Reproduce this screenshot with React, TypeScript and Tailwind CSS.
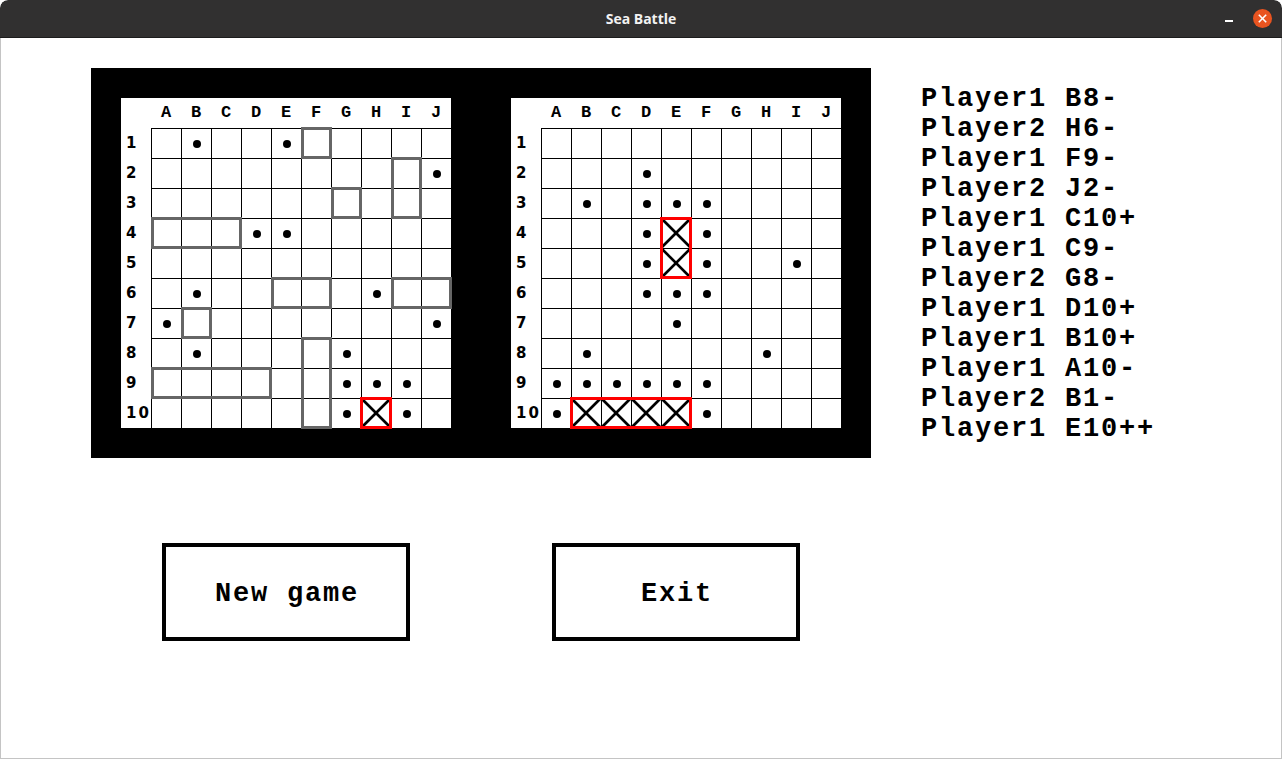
import React from "react";

const COLS = "ABCDEFGHIJ".split("");
const ROWS = Array.from({ length: 10 }, (_, i) => i + 1);

type Range = [string, string];

type BoardData = {
  dots: string[];
  ships: Range[];
  hits: Range[];
};

const pos = (code: string) => ({
  c: COLS.indexOf(code[0]),
  r: parseInt(code.slice(1), 10) - 1,
});

const span = ([from, to]: Range) => {
  const a = pos(from);
  const b = pos(to);
  return {
    c: Math.min(a.c, b.c),
    r: Math.min(a.r, b.r),
    w: Math.abs(a.c - b.c) + 1,
    h: Math.abs(a.r - b.r) + 1,
  };
};

const cellsIn = (range: Range) => {
  const s = span(range);
  const out: string[] = [];
  for (let r = s.r; r < s.r + s.h; r++) {
    for (let c = s.c; c < s.c + s.w; c++) out.push(`${COLS[c]}${r + 1}`);
  }
  return out;
};

const myBoard: BoardData = {
  dots: ["B1", "E1", "J2", "D4", "E4", "B6", "H6", "A7", "J7", "B8", "G8", "G9", "H9", "I9", "G10", "I10"],
  ships: [
    ["F1", "F1"],
    ["I2", "I3"],
    ["G3", "G3"],
    ["A4", "C4"],
    ["E6", "F6"],
    ["I6", "J6"],
    ["B7", "B7"],
    ["F8", "F10"],
    ["A9", "D9"],
  ],
  hits: [["H10", "H10"]],
};

const enemyBoard: BoardData = {
  dots: [
    "D2",
    "B3", "D3", "E3", "F3",
    "D4", "F4",
    "D5", "F5", "I5",
    "D6", "E6", "F6",
    "E7",
    "B8", "H8",
    "A9", "B9", "C9", "D9", "E9", "F9",
    "A10", "F10",
  ],
  ships: [],
  hits: [
    ["E4", "E5"],
    ["B10", "E10"],
  ],
};

const moves = [
  "Player1 B8-",
  "Player2 H6-",
  "Player1 F9-",
  "Player2 J2-",
  "Player1 C10+",
  "Player1 C9-",
  "Player2 G8-",
  "Player1 D10+",
  "Player1 B10+",
  "Player1 A10-",
  "Player2 B1-",
  "Player1 E10++",
];

const mono = "font-['Liberation_Mono','Courier_New',monospace]";

const Board = ({ data }: { data: BoardData }) => {
  const hitCells = new Set(data.hits.flatMap(cellsIn));
  const dots = new Set(data.dots);

  return (
    <div className="flex flex-col bg-white w-[330px] h-[330px]">
      <div className={`flex h-[30px] ${mono} text-[17px] font-bold text-black`}>
        <div className="w-[30px]" />
        {COLS.map((col) => (
          <div key={col} className="w-[30px] flex items-center justify-center">
            {col}
          </div>
        ))}
      </div>
      <div className="flex">
        <div className="flex flex-col w-[30px] font-['DejaVu_Sans',sans-serif] text-[15px] font-bold tracking-[2px] text-black">
          {ROWS.map((row) => (
            <div key={row} className="h-[30px] flex items-center pl-[5px]">
              {row}
            </div>
          ))}
        </div>
        <div className="relative grid grid-cols-10 w-[300px] h-[300px]">
          {ROWS.map((row) =>
            COLS.map((col) => {
              const code = `${col}${row}`;
              return (
                <div
                  key={code}
                  className="relative w-[30px] h-[30px] border-l border-t border-black flex items-center justify-center"
                >
                  {dots.has(code) && <div className="w-2 h-2 rounded-full bg-black" />}
                  {hitCells.has(code) && (
                    <svg className="absolute -left-px -top-px" width="30" height="30" viewBox="0 0 30 30">
                      <line x1="1" y1="1" x2="29" y2="29" stroke="black" strokeWidth="2.6" />
                      <line x1="29" y1="1" x2="1" y2="29" stroke="black" strokeWidth="2.6" />
                    </svg>
                  )}
                </div>
              );
            })
          )}
          {data.ships.map((range, i) => {
            const s = span(range);
            return (
              <div
                key={`s${i}`}
                className="absolute border-[3px] border-[#666666]"
                style={{ left: s.c * 30, top: s.r * 30 - 1, width: s.w * 30 + 1, height: s.h * 30 + 2 }}
              />
            );
          })}
          {data.hits.map((range, i) => {
            const s = span(range);
            return (
              <div
                key={`h${i}`}
                className="absolute border-[3px] border-[#ff0000]"
                style={{ left: s.c * 30 - 1, top: s.r * 30 - 1, width: s.w * 30 + 2, height: s.h * 30 + 2 }}
              />
            );
          })}
        </div>
      </div>
    </div>
  );
};

const BigButton = ({ label }: { label: string }) => (
  <button
    type="button"
    className={`w-[248px] h-[98px] border-4 border-black bg-white flex items-center justify-center pt-[3px] ${mono} text-[27px] leading-[30px] tracking-[1.8px] font-bold text-black`}
  >
    <span className="mr-[-2px]">{label}</span>
  </button>
);

export default function App() {
  return (
    <div className="w-[1282px] h-[759px] flex flex-col overflow-hidden bg-white rounded-t-[8px]">
      <div className="relative h-[38px] shrink-0 bg-[#313030] border-b border-[#1c1c1c] flex items-center justify-center rounded-t-[8px]">
        <span className="font-['Open_Sans','Noto_Sans',sans-serif] text-[14px] font-bold text-[#f2f2f2]">
          Sea Battle
        </span>
        <div className="absolute right-[10px] top-[9px] flex items-center gap-[20px]">
          <div className="w-[8px] h-[2px] bg-white mt-[4px]" />
          <div className="w-[19px] h-[19px] rounded-full bg-[#e95420] flex items-center justify-center">
            <svg width="9" height="9" viewBox="0 0 9 9">
              <line x1="0.8" y1="0.8" x2="8.2" y2="8.2" stroke="white" strokeWidth="1.6" />
              <line x1="8.2" y1="0.8" x2="0.8" y2="8.2" stroke="white" strokeWidth="1.6" />
            </svg>
          </div>
        </div>
      </div>

      <div className="flex-1 flex flex-col border-x border-b border-[#c4c4c4] pl-[90px] pt-[30px]">
        <div className="flex items-start">
          <div className="flex gap-[60px] bg-black p-[30px]">
            <Board data={myBoard} />
            <Board data={enemyBoard} />
          </div>
          <div className={`ml-[50px] mt-[16px] flex flex-col ${mono} text-[27px] leading-[30px] tracking-[1.8px] font-bold text-black`}>
            {moves.map((move, i) => (
              <div key={i} className="whitespace-pre">
                {move}
              </div>
            ))}
          </div>
        </div>

        <div className="flex gap-[142px] pl-[71px] mt-[85px]">
          <BigButton label="New game" />
          <BigButton label="Exit" />
        </div>
      </div>
    </div>
  );
}
